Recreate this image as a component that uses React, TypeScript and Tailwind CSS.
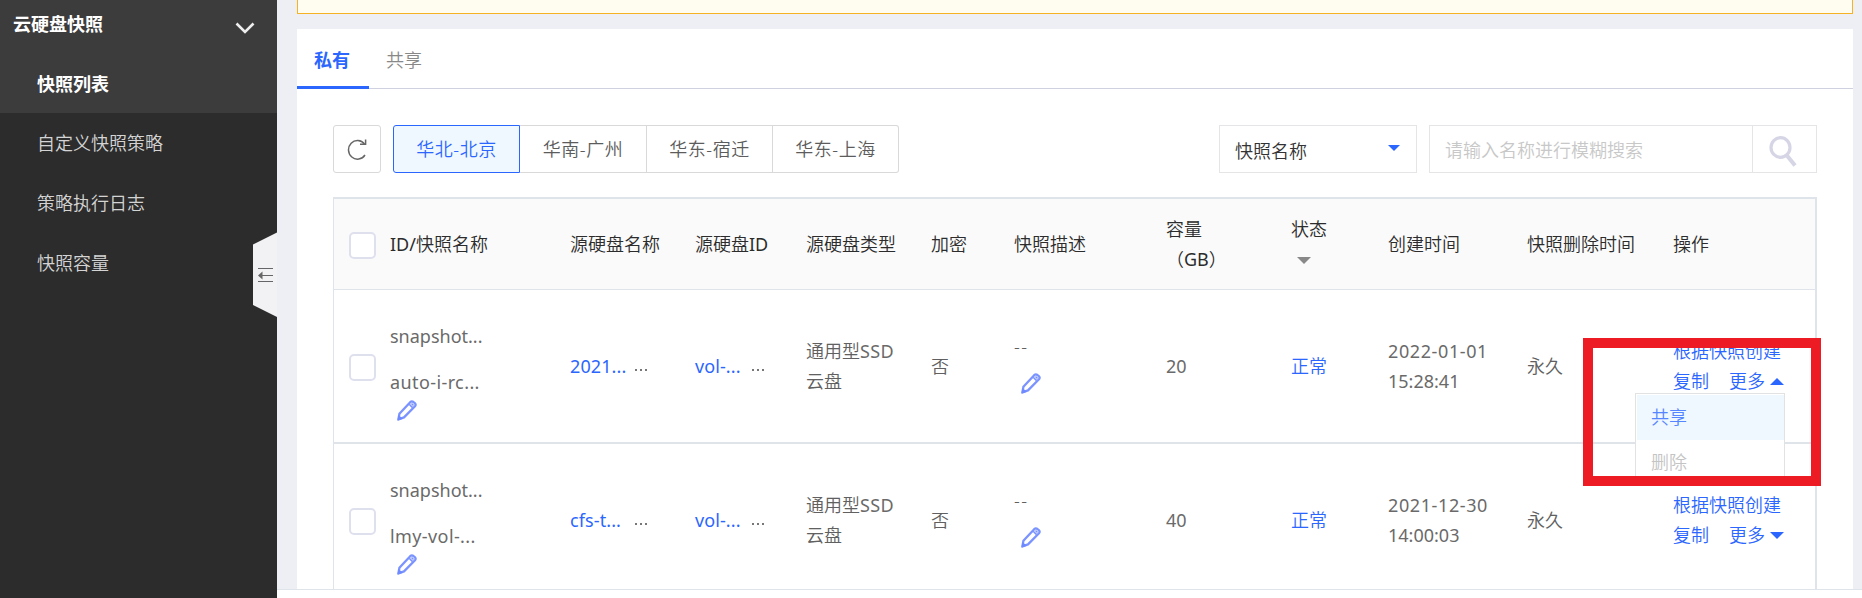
import React from "react";

const cols =
  "grid grid-cols-[56px_180px_125px_111px_125px_83px_152px_125px_97px_139px_146px_1fr]";

function Checkbox() {
  return <span className="mt-[2px] block h-[27px] w-[27px] rounded-[5px] border-2 border-[#dfe0ee] bg-white" />;
}

function Pencil({ className = "" }: { className?: string }) {
  return (
    <svg width="20" height="21" viewBox="0 0 20 21" fill="none" className={className}>
      <path
        d="M1.400 19.400 L2.400 13.800 L13.200 2.200 Q14.800 0.700 16.400 2 L17.800 3.200 Q19.300 4.600 18 6.200 L7 17.400 Z"
        stroke="#7b93ff"
        strokeWidth="2.300"
        strokeLinejoin="round"
      />
      <path d="M12.200 4.200 L15.600 7.600 M14.500 3.500 L16.500 5.500" stroke="#7b93ff" strokeWidth="1.600" />
      <path d="M0.400 20.800 L1.400 15 L6 18.800 Z" fill="#6f8aff" />
    </svg>
  );
}

function Caret({ up = false }: { up?: boolean }) {
  return (
    <svg width="14" height="7" viewBox="0 0 14 7" className="ml-[5px]">
      <path d={up ? "M0 7 L7 0 L14 7 Z" : "M0 0 H14 L7 7 Z"} fill="#2b66ff" />
    </svg>
  );
}

function Clipped({ text, width }: { text: string; width: string }) {
  return (
    <div className="flex items-center">
      <span className={`${width} font-normal tracking-[0.1px] text-[#2b66ff]`}>{text}</span>
      <span className="flex gap-[3px] pt-[7px]">
        <i className="h-[2px] w-[2px] bg-[#777]" />
        <i className="h-[2px] w-[2px] bg-[#777]" />
        <i className="h-[2px] w-[2px] bg-[#777]" />
      </span>
    </div>
  );
}

type Snapshot = {
  name: string;
  disk: string;
  size: string;
  date: string;
  time: string;
  open?: boolean;
};

const snapshots: Snapshot[] = [
  { name: "auto-i-rc...", disk: "2021...", size: "20", date: "2022-01-01", time: "15:28:41", open: true },
  { name: "lmy-vol-...", disk: "cfs-t...", size: "40", date: "2021-12-30", time: "14:00:03" },
];

function Row({ s }: { s: Snapshot }) {
  return (
    <div className={`${cols} h-[154px] shrink-0 items-center border-b-2 border-[#dfe4ea] leading-[30px] text-[#606060]`}>
      <div className="pl-[15px]">
        <Checkbox />
      </div>
      <div className="self-start pt-[31px] font-normal text-[#6a6a6a]">
        <div>snapshot...</div>
        <div className="pt-[16px] tracking-[0.400px]">{s.name}</div>
        <Pencil className="mt-[3px] ml-[7px]" />
      </div>
      <Clipped text={s.disk} width="w-[65px]" />
      <Clipped text="vol-..." width="w-[57px]" />
      <div>
        <div>
          通用型<span className="font-normal tracking-[0.400px] text-[#6a6a6a]">SSD</span>
        </div>
        <div>云盘</div>
      </div>
      <div>否</div>
      <div className="self-start pt-[41px]">
        <div className="tracking-[1.500px]">--</div>
        <Pencil className="mt-[12px] ml-[7px]" />
      </div>
      <div className="font-normal text-[#6a6a6a]">{s.size}</div>
      <div className="text-[#2b66ff]">正常</div>
      <div className="font-normal text-[#6a6a6a]">
        <div className="tracking-[0.600px]">{s.date}</div>
        <div>{s.time}</div>
      </div>
      <div>永久</div>
      <div className="text-[#2b66ff]">
        <div>根据快照创建</div>
        <div className="flex items-center">
          <span className="mr-[20px]">复制</span>
          <span>更多</span>
          <Caret up={s.open} />
        </div>
      </div>
    </div>
  );
}

function Sidebar() {
  return (
    <aside className="relative w-[277px] shrink-0 bg-[#2c2c2c] text-[18px] text-[#d4d4d4]">
      <div className="h-[113px] bg-[#3c3c3c] font-bold text-white">
        <div className="flex h-[54px] items-start justify-between pr-[22px] pl-[13px]">
          <span className="leading-[48px]">云硬盘快照</span>
          <svg width="20" height="12" viewBox="0 0 20 12" fill="none" className="mt-[22px]">
            <path d="M1.500 1.500 L10 10 L18.500 1.500" stroke="#eee" strokeWidth="2.600" />
          </svg>
        </div>
        <div className="pl-[37px] leading-[60px]">快照列表</div>
      </div>
      <nav className="pl-[37px] leading-[60px]">
        <div>自定义快照策略</div>
        <div>策略执行日志</div>
        <div>快照容量</div>
      </nav>
      <svg width="24" height="86" viewBox="0 0 24 86" className="absolute top-[232px] right-0">
        <path d="M24 0.500 L0 12.500 V73 L24 85 Z" fill="#f2f2f5" />
        <path d="M5 36.500 H20 M9 43.500 H20 M5 49.500 H20" stroke="#666" strokeWidth="1.200" />
        <path d="M5 43.500 L9.500 39.500 V47.500 Z" fill="#666" />
      </svg>
    </aside>
  );
}

function Toolbar() {
  return (
    <div className="flex h-[48px] text-[18px] text-[#5c5c5c]">
      <button className="flex w-[48px] items-center justify-center rounded-[3px] border border-[#d9d9d9] pr-px">
        <svg width="20" height="21" viewBox="0 0 20 21" fill="none" stroke="#666" strokeWidth="1.500">
          <path d="M18 16 A9 9.300 0 1 1 17.500 5" />
          <path d="M18.600 0.500 V5.200 H13" />
        </svg>
      </button>
      <div className="ml-3 flex w-[506px] tracking-[0.500px]">
        <button className="w-[127px] rounded-l-[3px] border border-[#2b66ff] bg-[#f0f8ff] pt-px text-[#2b66ff]">华北-北京</button>
        <button className="w-[127px] border-y border-r border-[#d9d9d9] pt-px">华南-广州</button>
        <button className="w-[126px] border-y border-r border-[#d9d9d9] pt-px">华东-宿迁</button>
        <button className="w-[126px] rounded-r-[3px] border-y border-r border-[#d9d9d9] pt-px">华东-上海</button>
      </div>
      <div className="ml-auto flex w-[198px] items-center justify-between border border-[#e5e5e8] pr-[16px] pl-[15px] text-[#333]">
        <span className="pt-[5px]">快照名称</span>
        <svg width="12" height="6" viewBox="0 0 12 6" className="mb-[2px]">
          <path d="M0 0 H12 L6 6 Z" fill="#2b66ff" />
        </svg>
      </div>
      <div className="ml-3 flex w-[388px] border border-[#e5e5e8]">
        <span className="w-[323px] border-r border-[#e5e5e8] pl-[15px] leading-[48px] text-[#c8c8c8]">请输入名称进行模糊搜索</span>
        <svg width="28" height="31" viewBox="0 0 28 31" fill="none" stroke="#d5d5e6" className="mt-[10px] ml-[16px]">
          <ellipse cx="11.500" cy="11.500" rx="9.500" ry="9.800" strokeWidth="3.200" />
          <path d="M17.500 19 L26 29.500" strokeWidth="4" />
        </svg>
      </div>
    </div>
  );
}

export default function App() {
  return (
    <div className="relative flex h-[598px] w-[1862px] overflow-hidden bg-white font-['Noto_Sans','Noto_Sans_CJK_SC',sans-serif] text-[18px] font-[350]">
      <Sidebar />
      <div className="flex min-w-0 flex-1 flex-col">
        <main className="flex h-[590px] flex-col overflow-hidden border-b border-[#dfe4ea] bg-[#eeeff4] pr-[9px] pl-[20px]">
          <div className="h-[14px] shrink-0 border-x border-b border-[#f5b324] bg-[#fffdf0]" />
          <section className="mt-[15px] flex min-h-0 flex-1 flex-col bg-white">
            <div className="flex h-[60px] shrink-0 border-b border-[#d0d1e0] leading-[62px] text-[#888]">
              <div className="h-[60px] w-[72px] border-b-[3px] border-[#2b66ff] pl-[17px] font-bold text-[#2b66ff]">私有</div>
              <div className="pl-[17px]">共享</div>
            </div>
            <div className="flex min-h-0 flex-1 flex-col px-9 pt-9">
              <Toolbar />
              <div className="mt-6 flex min-h-0 flex-1 flex-col overflow-hidden border-t-2 border-r-2 border-l border-[#dfe4ea]">
                <div className={`${cols} h-[91px] shrink-0 items-center border-b border-[#dfe4ea] bg-[#fafafa] leading-[30px] text-[#2c2c2c]`}>
                  <div className="pl-[15px]">
                    <Checkbox />
                  </div>
                  <div>
                    <span className="font-normal">ID/</span>快照名称
                  </div>
                  <div>源硬盘名称</div>
                  <div>
                    源硬盘<span className="font-normal">ID</span>
                  </div>
                  <div>源硬盘类型</div>
                  <div>加密</div>
                  <div>快照描述</div>
                  <div>
                    <div>容量</div>
                    <div>
                      （<span className="font-normal">GB</span>）
                    </div>
                  </div>
                  <div>
                    <div>状态</div>
                    <div className="flex h-[30px] items-center pt-[2px] pl-[6px]">
                      <svg width="14" height="7" viewBox="0 0 14 7">
                        <path d="M0 0 H14 L7 7 Z" fill="#888" />
                      </svg>
                    </div>
                  </div>
                  <div>创建时间</div>
                  <div>快照删除时间</div>
                  <div>操作</div>
                </div>
                {snapshots.map((s) => (
                  <Row key={s.name} s={s} />
                ))}
              </div>
            </div>
          </section>
        </main>
      </div>
      <div className="absolute top-[338px] left-[1583px] h-[148px] w-[238px] overflow-hidden border-[10px] border-[#ed1c24]">
        <div className="absolute top-[45px] left-[42px] h-[100px] w-[150px] border border-[#e2e2e2] bg-white pt-px pl-px">
          <div className="h-[45px] bg-[#f0f8ff] pl-[14px] leading-[45px] text-[#5585ff]">共享</div>
          <div className="pl-[14px] leading-[45px] text-[#c4c4c4]">删除</div>
        </div>
      </div>
    </div>
  );
}
